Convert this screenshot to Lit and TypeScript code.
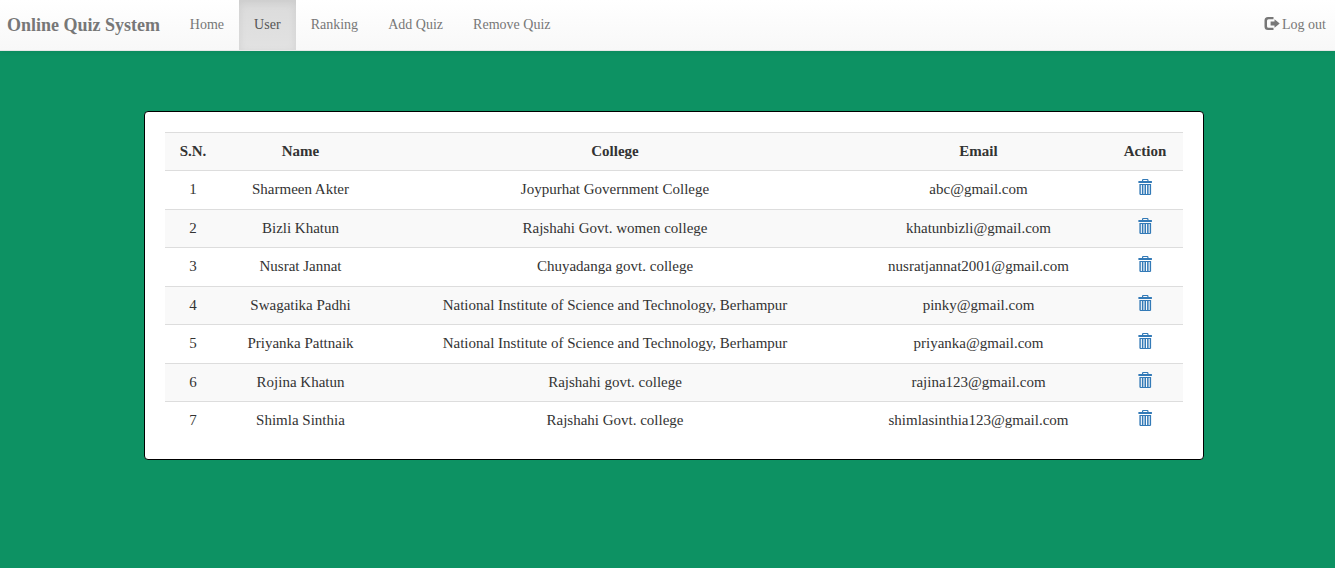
import { LitElement, html, css, svg } from "lit";
import { customElement } from "lit/decorators.js";
import { classMap } from "lit/directives/class-map.js";

const trash = html`<svg class="trash" viewBox="0 0 14 16" aria-hidden="true">
  ${svg`<path fill-rule="evenodd" d="M.4 2H4V.8L4.800 0h4.900l.8.8V2h3.400v2H.4zM5.200 1v1h4.100V1zM1.400 5h11.700v10.200l-.8.8H2.200l-.8-.8zM2.800 6v9h1.100V6zM5.400 6v9h1.100V6zM8 6v9h1.100V6zM10.600 6v9h1.100V6z"/>`}
</svg>`;

const logout = html`<svg class="logout" viewBox="0 0 16 14" aria-hidden="true">
  ${svg`<path d="M9.500 0v2.300H4.500Q3 2.300 3 3.800v5.400Q3 10.700 4.500 10.700H9.500V13H4Q.5 13 .5 9.500v-6Q.5 0 4 0zM10.500 2.200L15.700 6.500L10.500 10.800V8.400H6.600V4.600h3.900z"/>`}
</svg>`;

const links = ["Home", "User", "Ranking", "Add Quiz", "Remove Quiz"];

const users = [
  ["Sharmeen Akter", "Joypurhat Government College", "abc@gmail.com"],
  ["Bizli Khatun", "Rajshahi Govt. women college", "khatunbizli@gmail.com"],
  ["Nusrat Jannat", "Chuyadanga govt. college", "nusratjannat2001@gmail.com"],
  ["Swagatika Padhi", "National Institute of Science and Technology, Berhampur", "pinky@gmail.com"],
  ["Priyanka Pattnaik", "National Institute of Science and Technology, Berhampur", "priyanka@gmail.com"],
  ["Rojina Khatun", "Rajshahi govt. college", "rajina123@gmail.com"],
  ["Shimla Sinthia", "Rajshahi Govt. college", "shimlasinthia123@gmail.com"],
];

@customElement("app-root")
export class AppRoot extends LitElement {
  static styles = css`
    * { box-sizing: border-box; }
    :host {
      display: block;
      min-height: 100vh;
      background: #0d9263;
      color: #333;
      font-family: "Liberation Serif", "Times New Roman", serif;
      font-size: 14px;
      line-height: 20px;
    }
    a { color: inherit; text-decoration: none; }
    .navbar {
      display: flex;
      height: 51px;
      color: #777;
      background: linear-gradient(#fff, #f8f8f8);
      border-bottom: 1px solid #e7e7e7;
      box-shadow: 0 1px 5px rgba(0, 0, 0, 0.075);
    }
    .brand {
      width: 174.8px;
      padding: 15px 0 15px 7px;
      font-size: 18px;
      font-weight: bold;
      white-space: nowrap;
    }
    .link { padding: 15px 15.1px 15px 15px; white-space: nowrap; }
    .active {
      color: #555;
      background: linear-gradient(#dbdbdb, #e2e2e2);
      box-shadow: inset 0 3px 9px rgba(0, 0, 0, 0.075);
    }
    .right { margin-left: auto; padding: 15px 9px 15px 0; display: flex; gap: 2px; }
    .logout { width: 16px; height: 14px; margin-top: 2px; fill: currentColor; }
    .panel {
      width: 1060px;
      height: 349px;
      margin: 60px 0 0 144px;
      padding: 20px;
      background: #fff;
      border: 1px solid #000;
      border-radius: 4px;
    }
    .table {
      width: 1018px;
      table-layout: fixed;
      border-collapse: collapse;
      border-spacing: 0;
      font-size: 15px;
      line-height: 21.43px;
      text-align: center;
    }
    th, td { padding: 8px; border-top: 1px solid #ddd; vertical-align: top; }
    tr:nth-child(odd) { background: #f9f9f9; }
    .sn { width: 56px; }
    .name { width: 159px; }
    .college { width: 470px; }
    .email { width: 257px; }
    .trash { width: 14px; height: 16px; fill: #337ab7; display: inline-block; vertical-align: top; }
  `;

  render() {
    return html`
      <nav class="navbar">
        <a class="brand" href="#">Online Quiz System</a>
        ${links.map((l) => html`<a href="#" class=${classMap({ link: true, active: l === "User" })}>${l}</a>`)}
        <a class="right" href="#">${logout}<span>Log out</span></a>
      </nav>
      <main class="panel">
        <table class="table">
          <tbody>
            <tr>
              <th class="sn">S.N.</th><th class="name">Name</th><th class="college">College</th><th class="email">Email</th><th>Action</th>
            </tr>
            ${users.map(
              (u, i) => html`<tr>
                <td>${i + 1}</td>${u.map((c) => html`<td>${c}</td>`)}
                <td><a href="#" aria-label="Remove">${trash}</a></td>
              </tr>`
            )}
          </tbody>
        </table>
      </main>
    `;
  }
}
